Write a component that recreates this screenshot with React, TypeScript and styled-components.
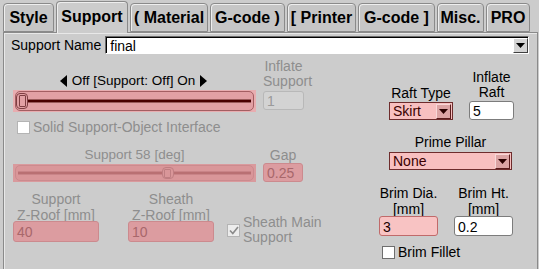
import React from 'react';
import styled, { createGlobalStyle } from 'styled-components';

const GlobalStyle = createGlobalStyle`
  * { box-sizing: border-box; }
  body {
    margin: 0;
    background: #cccccc;
    font-family: 'Liberation Sans', Arial, sans-serif;
    color: #000;
  }
`;

const Root = styled.div`
  padding-left: 3px;
  width: 538px;
  height: 269px;
  overflow: hidden;
`;

const TabBar = styled.div`
  display: flex;
  align-items: flex-end;
  gap: 2px;
  height: 32px;
`;

const Tab = styled.div<{ $active?: boolean; $w: number }>`
  position: relative;
  z-index: ${({ $active }) => ($active ? 1 : 0)};
  width: ${({ $w }) => $w}px;
  height: ${({ $active }) => ($active ? 32 : 29)}px;
  margin-bottom: ${({ $active }) => ($active ? -1 : 0)}px;
  display: flex;
  align-items: center;
  justify-content: center;
  font-size: 16px;
  font-weight: bold;
  white-space: nowrap;
  background: ${({ $active }) => ($active ? '#cccccc' : '#c6c6c6')};
  border: 1px solid #8a8a8a;
  border-bottom: ${({ $active }) => ($active ? 'none' : '1px solid #8a8a8a')};
  border-radius: 4px 4px 0 0;
  box-shadow: inset 1px 1px 0 #eeeeee;
  padding-bottom: ${({ $active }) => ($active ? 2 : 0)}px;
`;

const Panel = styled.div`
  width: 535px;
  height: 240px;
  border: 1px solid #8a8a8a;
  border-bottom: none;
  box-shadow: inset 1px 1px 0 #e8e8e8;
`;

const NameRow = styled.div`
  display: flex;
  align-items: center;
  gap: 4px;
  margin: 3px 0 0 7px;
  height: 18px;
  font-size: 14px;
`;

const NameField = styled.div`
  width: 424px;
  height: 18px;
  display: flex;
  align-items: center;
  justify-content: space-between;
  background: #fff;
  border: 1px solid;
  border-color: #6a6a6a #ffffff #ffffff #6a6a6a;
  box-shadow: inset 1px 1px 0 #000;
  padding: 1px 0 0 4px;
  font-size: 14px;
`;

const GrayButton = styled.div`
  width: 15px;
  height: 15px;
  display: flex;
  align-items: center;
  justify-content: center;
  background: #d4d4d4;
  border: 1px solid;
  border-color: #ffffff #404040 #404040 #ffffff;
`;

const Body = styled.div`
  display: flex;
  padding-left: 9px;
`;

const LeftCol = styled.div`
  width: 366px;
  display: flex;
  flex-direction: column;
`;

const RightCol = styled.div`
  display: flex;
  flex-direction: column;
`;

const Row = styled.div<{ $mt: number; $pl?: number; $gap?: number }>`
  display: flex;
  align-items: flex-end;
  margin-top: ${({ $mt }) => $mt}px;
  padding-left: ${({ $pl }) => $pl || 0}px;
  gap: ${({ $gap }) => $gap || 0}px;
`;

const Group = styled.div<{ $w: number; $mb?: number }>`
  width: ${({ $w }) => $w}px;
  display: flex;
  flex-direction: column;
  align-items: stretch;
  margin-bottom: ${({ $mb }) => $mb || 0}px;
`;

const Label = styled.div<{ $disabled?: boolean; $size?: number; $lh?: number; $mb?: number }>`
  font-size: ${({ $size }) => $size || 14}px;
  line-height: ${({ $lh }) => $lh || 15}px;
  text-align: center;
  white-space: nowrap;
  color: ${({ $disabled }) => ($disabled ? '#8e8e8e' : '#000')};
  margin-bottom: ${({ $mb }) => $mb || 0}px;
`;

const ArrowLabel = styled.div`
  display: flex;
  align-items: center;
  justify-content: center;
  gap: 5px;
  font-size: 13.5px;
  line-height: 15px;
  margin-bottom: 2px;
  margin-right: 2px;
`;

const SliderOuter = styled.div<{ $disabled?: boolean; $h: number }>`
  height: ${({ $h }) => $h}px;
  padding: 1px 2px;
  background: ${({ $disabled }) => ($disabled ? '#d99a9d' : '#e8adb0')};
`;

const SliderInner = styled.div<{ $disabled?: boolean }>`
  position: relative;
  height: 100%;
  border-radius: 5px;
  border: 1px solid ${({ $disabled }) => ($disabled ? '#cc8a8e' : '#a45e62')};
  background: ${({ $disabled }) => ($disabled ? '#d99699' : '#e2a0a4')};
`;

const Track = styled.div<{ $disabled?: boolean }>`
  position: absolute;
  left: 2px;
  right: 2px;
  top: 50%;
  height: 4px;
  margin-top: -2px;
  background: ${({ $disabled }) => ($disabled ? '#b97073' : '#4a0000')};
  border-top: 1px solid ${({ $disabled }) => ($disabled ? '#c98488' : '#9a5a5a')};
  border-bottom: 1px solid ${({ $disabled }) => ($disabled ? '#c98488' : '#9a5a5a')};
`;

const Thumb = styled.div<{ $disabled?: boolean }>`
  position: absolute;
  top: 1px;
  bottom: 1px;
  width: 12px;
  border-radius: 4px;
  border: 1px solid ${({ $disabled }) => ($disabled ? '#bf7e82' : '#7e3e42')};
  background: ${({ $disabled }) => ($disabled ? '#d99699' : '#e2a0a4')};
  display: flex;
  align-items: center;
  justify-content: center;
  &::after {
    content: '';
    width: 5px;
    height: 70%;
    border: 1px solid ${({ $disabled }) => ($disabled ? '#bf7e82' : '#7e3e42')};
    border-radius: 1px;
  }
`;

type FieldKind = 'white' | 'gray' | 'pinkOff' | 'pink';

const fieldColors: Record<FieldKind, { bg: string; border: string; color: string }> = {
  white: { bg: '#ffffff', border: '#7c7c7c', color: '#000' },
  gray: { bg: '#d3d3d3', border: '#b8b8b8', color: '#9a9a9a' },
  pinkOff: { bg: '#dc9ca0', border: '#cc8a8e', color: '#a8676b' },
  pink: { bg: '#f8c3c3', border: '#c06a6a', color: '#1a0000' },
};

const Field = styled.div<{ $kind: FieldKind; $h: number; $mt?: number }>`
  height: ${({ $h }) => $h}px;
  margin-top: ${({ $mt }) => $mt || 0}px;
  display: flex;
  align-items: center;
  padding: 1px 0 0 3px;
  font-size: 14px;
  border-radius: 3px;
  background: ${({ $kind }) => fieldColors[$kind].bg};
  border: 1px solid ${({ $kind }) => fieldColors[$kind].border};
  color: ${({ $kind }) => fieldColors[$kind].color};
`;

const Select = styled.div<{ $h: number }>`
  height: ${({ $h }) => $h}px;
  display: flex;
  align-items: center;
  justify-content: space-between;
  padding: 1px 1px 1px 3px;
  font-size: 14px;
  color: #3a0000;
  background: #f8c0c0;
  border: 1px solid #6e2c2c;
`;

const PinkButton = styled.div`
  width: 15px;
  height: 15px;
  display: flex;
  align-items: center;
  justify-content: center;
  background: #dca4a4;
  border: 1px solid;
  border-color: #f8d8d8 #5a1c1c #5a1c1c #f8d8d8;
`;

const CheckRow = styled.div<{ $mt: number; $pl?: number; $disabled?: boolean; $mb?: number; $ml?: number }>`
  display: flex;
  align-items: center;
  gap: 3px;
  margin-top: ${({ $mt }) => $mt}px;
  margin-bottom: ${({ $mb }) => $mb || 0}px;
  margin-left: ${({ $ml }) => $ml || 0}px;
  padding-left: ${({ $pl }) => $pl || 0}px;
  font-size: 14px;
  line-height: 15px;
  color: ${({ $disabled }) => ($disabled ? '#8e8e8e' : '#000')};
`;

const CheckText = styled.div`
  text-align: left;
`;

const Box = styled.div<{ $disabled?: boolean; $checked?: boolean }>`
  width: 13px;
  height: 13px;
  flex: none;
  display: flex;
  align-items: center;
  justify-content: center;
  background: ${({ $checked }) => ($checked ? '#ececec' : '#ffffff')};
  border: 1px solid ${({ $disabled }) => ($disabled ? '#b4b4b4' : '#6e6e6e')};
`;

const DownArrow = ({ color = '#000' }: { color?: string }) => (
  <svg width="9" height="5" viewBox="0 0 9 5">
    <polygon points="0,0 9,0 4.5,5" fill={color} />
  </svg>
);

const SideArrow = ({ dir }: { dir: 'left' | 'right' }) => (
  <svg width="7" height="12" viewBox="0 0 7 12">
    <polygon points={dir === 'left' ? '7,0 7,12 0,6' : '0,0 0,12 7,6'} fill="#000" />
  </svg>
);

const Slider = ({ value, h, disabled }: { value: number; h: number; disabled?: boolean }) => (
  <SliderOuter $h={h} $disabled={disabled}>
    <SliderInner $disabled={disabled}>
      <Track $disabled={disabled} />
      <Thumb $disabled={disabled} style={{ left: `${value}%` }} />
    </SliderInner>
  </SliderOuter>
);

const tabs = [
  { label: 'Style', w: 51 },
  { label: 'Support', w: 72, active: true },
  { label: '( Material', w: 78 },
  { label: 'G-code )', w: 75 },
  { label: '[ Printer', w: 69 },
  { label: 'G-code ]', w: 77 },
  { label: 'Misc.', w: 47 },
  { label: 'PRO', w: 44 },
];

export default function App() {
  return (
    <Root>
      <GlobalStyle />
      <TabBar>
        {tabs.map((t) => (
          <Tab key={t.label} $w={t.w} $active={t.active}>
            {t.label}
          </Tab>
        ))}
      </TabBar>
      <Panel>
        <NameRow>
          Support Name
          <NameField>
            final
            <GrayButton>
              <DownArrow />
            </GrayButton>
          </NameField>
        </NameRow>
        <Body>
          <LeftCol>
            <Row $mt={5} $gap={7}>
              <Group $w={243}>
                <ArrowLabel>
                  <SideArrow dir="left" />
                  Off [Support: Off] On
                  <SideArrow dir="right" />
                </ArrowLabel>
                <Slider value={0} h={22} />
              </Group>
              <Group $w={41} $mb={2}>
                <Label $disabled>Inflate</Label>
                <Label $disabled $mb={2}>Support</Label>
                <Field $kind="gray" $h={19}>1</Field>
              </Group>
            </Row>
            <CheckRow $mt={8} $pl={4} $disabled>
              <Box $disabled />
              Solid Support-Object Interface
            </CheckRow>
            <Row $mt={12} $gap={7}>
              <Group $w={243}>
                <Label $disabled $size={13.5} $mb={2}>Support 58 [deg]</Label>
                <Slider value={61.5} h={18} disabled />
              </Group>
              <Group $w={40}>
                <Label $disabled>Gap</Label>
                <Field $kind="pinkOff" $h={19}>0.25</Field>
              </Group>
            </Row>
            <Row $mt={9} $gap={29}>
              <Group $w={86}>
                <Label $disabled $lh={16}>Support</Label>
                <Label $disabled $lh={16}>Z-Roof [mm]</Label>
                <Field $kind="pinkOff" $h={21} $mt={-2}>40</Field>
              </Group>
              <Group $w={86}>
                <Label $disabled $lh={16}>Sheath</Label>
                <Label $disabled $lh={16}>Z-Roof [mm]</Label>
                <Field $kind="pinkOff" $h={21} $mt={-2}>10</Field>
              </Group>
              <CheckRow $mt={0} $disabled $mb={-3} $ml={-16}>
                <Box $disabled $checked>
                  <svg width="10" height="9" viewBox="0 0 10 9">
                    <polyline points="1,4.5 3.8,7.5 9,1" fill="none" stroke="#8a8a8a" strokeWidth="1.6" />
                  </svg>
                </Box>
                <CheckText>
                  Sheath Main
                  <br />
                  Support
                </CheckText>
              </CheckRow>
            </Row>
          </LeftCol>
          <RightCol>
            <Row $mt={16} $pl={10} $gap={16}>
              <Group $w={64}>
                <Label $mb={1}>Raft Type</Label>
                <Select $h={18}>
                  Skirt
                  <PinkButton>
                    <DownArrow color="#2a0000" />
                  </PinkButton>
                </Select>
              </Group>
              <Group $w={45}>
                <Label>Inflate</Label>
                <Label $mb={1}>Raft</Label>
                <Field $kind="white" $h={19}>5</Field>
              </Group>
            </Row>
            <Row $mt={15} $pl={10}>
              <Group $w={123}>
                <Label $mb={2}>Prime Pillar</Label>
                <Select $h={18}>
                  None
                  <PinkButton>
                    <DownArrow color="#2a0000" />
                  </PinkButton>
                </Select>
              </Group>
            </Row>
            <Row $mt={15} $gap={16}>
              <Group $w={59}>
                <Label $lh={16}>Brim Dia.</Label>
                <Label $lh={16}>[mm]</Label>
                <Field $kind="pink" $h={20} $mt={-1}>3</Field>
              </Group>
              <Group $w={59}>
                <Label $lh={16}>Brim Ht.</Label>
                <Label $lh={16}>[mm]</Label>
                <Field $kind="white" $h={20} $mt={-1}>0.2</Field>
              </Group>
            </Row>
            <CheckRow $mt={9} $pl={3}>
              <Box />
              Brim Fillet
            </CheckRow>
          </RightCol>
        </Body>
      </Panel>
    </Root>
  );
}
